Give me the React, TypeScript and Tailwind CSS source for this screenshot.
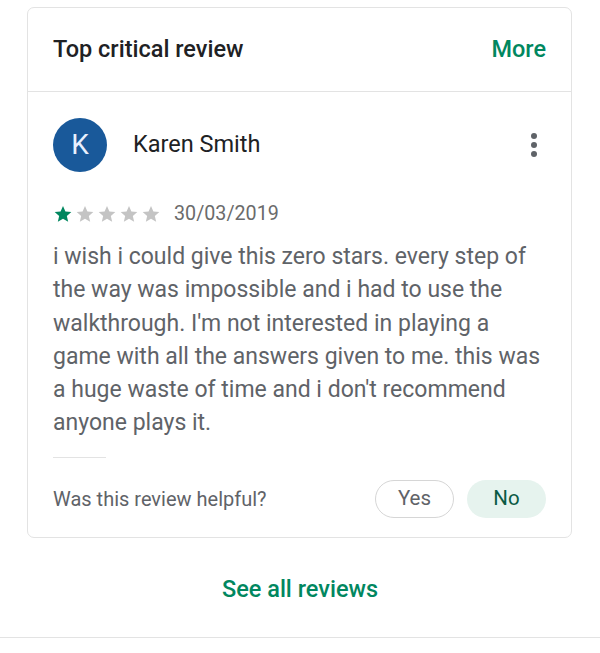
const reviewText =
  "i wish i could give this zero stars. every step of the way was impossible and i had to use the walkthrough. I'm not interested in playing a game with all the answers given to me. this was a huge waste of time and i don't recommend anyone plays it.";

function Star({ filled }: { filled: boolean }) {
  return (
    <svg width="20" height="20" viewBox="0 0 24 24" className="shrink-0">
      <path
        d="M12 2.5l2.9 6.6 7.1.6-5.4 4.7 1.6 7-6.2-3.7-6.2 3.7 1.6-7L2 9.7l7.1-.6z"
        fill={filled ? '#01875f' : '#c4c4c4'}
      />
    </svg>
  );
}

export default function App() {
  return (
    <div className="w-[600px] h-[653px] bg-white font-['Roboto',sans-serif] overflow-hidden">
      <div className="pt-[7px]">
        <div className="ml-[27px] w-[545px] border border-[#e3e3e3] rounded-[7px]">
          {/* header */}
          <div className="h-[84px] px-[25px] flex items-center justify-between border-b border-[#e3e3e3]">
            <span className="text-[23.5px] font-medium text-[#202124]">Top critical review</span>
            <span className="text-[23.5px] font-medium text-[#01875f]">More</span>
          </div>

          <div className="px-[25px] pt-[26px] pb-[19px]">
            <div className="flex items-center">
              <div className="w-[54px] h-[54px] rounded-full bg-[#19599a] flex items-center justify-center text-[28px] text-[#e8f0fe]">
                K
              </div>
              <span className="ml-[26px] text-[23.5px] text-[#202124]">Karen Smith</span>
              <div className="ml-auto mr-[9px] flex flex-col gap-[3px]">
                <span className="w-[6px] h-[6px] rounded-full bg-[#5f6368]" />
                <span className="w-[6px] h-[6px] rounded-full bg-[#5f6368]" />
                <span className="w-[6px] h-[6px] rounded-full bg-[#5f6368]" />
              </div>
            </div>

            <div className="mt-[32px] h-[20px] flex items-center">
              <div className="flex gap-[2px]">
                <Star filled />
                <Star filled={false} />
                <Star filled={false} />
                <Star filled={false} />
                <Star filled={false} />
              </div>
              <span className="ml-[13px] text-[19.7px] text-[#6b6b6b]">30/03/2019</span>
            </div>

            <p className="mt-[16px] text-[23px] leading-[33.3px] text-[#5f6368]">{reviewText}</p>

            <div className="mt-[17px] w-[53px] border-t border-[#e3e3e3]" />

            <div className="mt-[22px] flex items-center">
              <span className="text-[20px] text-[#5f6368]">Was this review helpful?</span>
              <div className="ml-auto flex gap-[13px]">
                <button className="w-[79px] h-[38px] rounded-full border border-[#d6d6d6] text-[20.5px] text-[#5f6368]">
                  Yes
                </button>
                <button className="w-[79px] h-[38px] rounded-full bg-[#e6f3ee] text-[20.5px] text-[#0b5a44]">
                  No
                </button>
              </div>
            </div>
          </div>
        </div>

        <div className="mt-[38px] h-[28px] flex items-center justify-center">
          <span className="text-[23.5px] font-medium text-[#01875f]">See all reviews</span>
        </div>
        <div className="mt-[33px] border-t border-[#e3e3e3]" />
      </div>
    </div>
  );
}
